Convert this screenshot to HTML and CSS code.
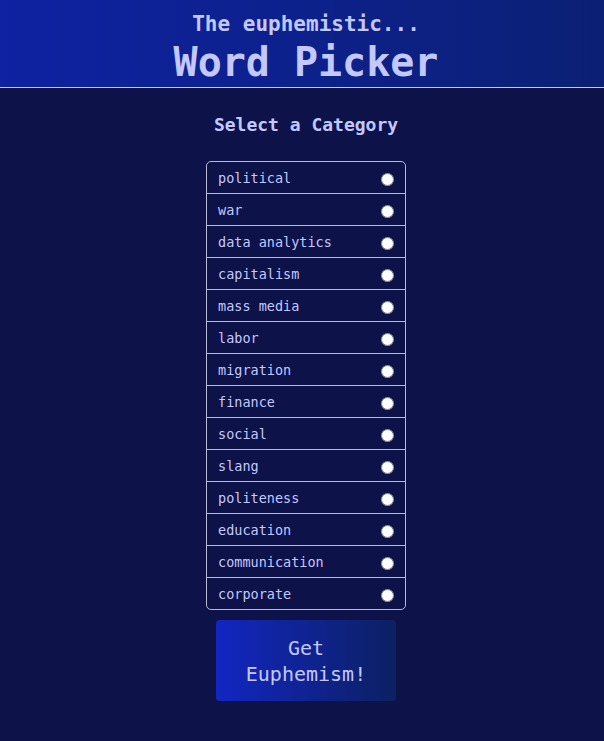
FILE: index.html
```html
<!DOCTYPE html>
<html>
<head>
<meta charset="utf-8">
<link rel="stylesheet" href="styles.css">
</head>
<body>
<header class="header">
  <div class="subtitle">The euphemistic...</div>
  <h1 class="title">Word Picker</h1>
</header>
<main class="main">
  <h2 class="heading">Select a Category</h2>
  <ul class="list">
    <li class="item"><span>political</span><input type="radio" name="cat"></li>
    <li class="item"><span>war</span><input type="radio" name="cat"></li>
    <li class="item"><span>data analytics</span><input type="radio" name="cat"></li>
    <li class="item"><span>capitalism</span><input type="radio" name="cat"></li>
    <li class="item"><span>mass media</span><input type="radio" name="cat"></li>
    <li class="item"><span>labor</span><input type="radio" name="cat"></li>
    <li class="item"><span>migration</span><input type="radio" name="cat"></li>
    <li class="item"><span>finance</span><input type="radio" name="cat"></li>
    <li class="item"><span>social</span><input type="radio" name="cat"></li>
    <li class="item"><span>slang</span><input type="radio" name="cat"></li>
    <li class="item"><span>politeness</span><input type="radio" name="cat"></li>
    <li class="item"><span>education</span><input type="radio" name="cat"></li>
    <li class="item"><span>communication</span><input type="radio" name="cat"></li>
    <li class="item"><span>corporate</span><input type="radio" name="cat"></li>
  </ul>
  <button class="button">Get<br>Euphemism!</button>
</main>
</body>
</html>
```
FILE: styles.css
```css
html, body {
  margin: 0;
  padding: 0;
  background: #0d1249;
  font-family: "DejaVu Sans Mono", monospace;
  color: #c3c8ff;
}
.header {
  border-bottom: 1px solid #c3c8ff;
  background: linear-gradient(to right, #0e22a2, #0b2074);
  display: flex;
  flex-direction: column;
  align-items: center;
  padding: 10px 0 0 8px;
  height: 77px;
}
.subtitle {
  font-size: 21px;
  font-weight: bold;
  line-height: 28px;
}
.title {
  margin: 2px 0 0;
  font-size: 40px;
  font-weight: bold;
  line-height: 44px;
}
.main {
  display: flex;
  flex-direction: column;
  align-items: center;
  padding-left: 8px;
}
.heading {
  margin: 25px 0 0;
  font-size: 18px;
  font-weight: bold;
  line-height: 24px;
}
.list {
  list-style: none;
  margin: 24px 0 0;
  padding: 0;
  width: 198px;
  border: 1px solid #b9bcd0;
  border-radius: 5px;
}
.item {
  height: 31px;
  display: flex;
  align-items: center;
  justify-content: space-between;
  padding: 0 11px 0 11px;
  font-size: 13.5px;
  border-top: 1px solid #b9bcd0;
}
.item:first-child {
  border-top: none;
}
.item input {
  margin: 4px 0 0;
  width: 13px;
  height: 13px;
}
.button {
  margin-top: 10px;
  width: 180px;
  height: 81px;
  border: none;
  border-radius: 4px;
  background: linear-gradient(to right, #1226c2, #0c2062);
  color: #c3c8ff;
  font-family: "DejaVu Sans Mono", monospace;
  font-size: 20px;
  line-height: 26px;
  padding: 0;
}
```
